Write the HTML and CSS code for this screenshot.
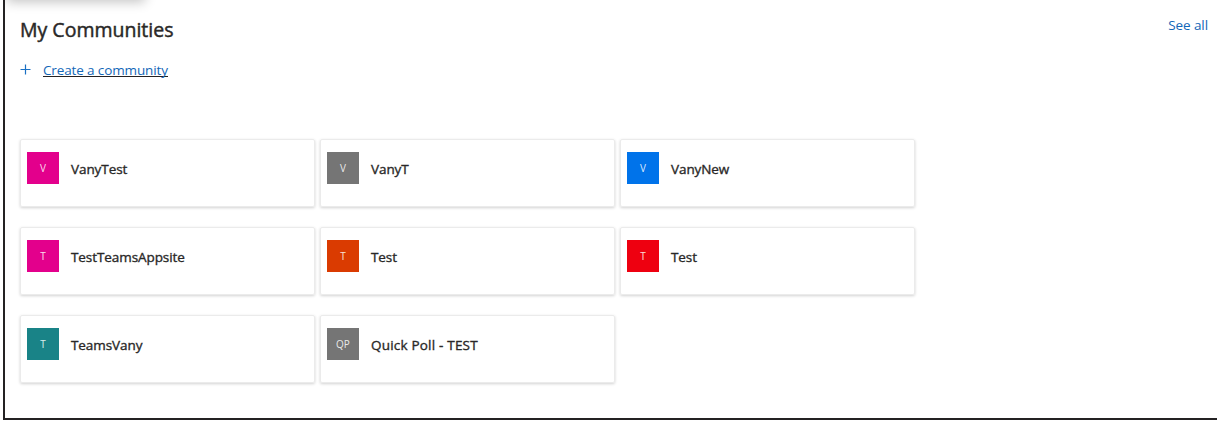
FILE: index.html
```html
<!DOCTYPE html>
<html lang="en">
<head>
<meta charset="utf-8">
<title>My Communities</title>
<link rel="stylesheet" href="styles.css">
</head>
<body>
<main class="panel">
  <div class="menu-shadow"></div>
  <header class="header">
    <h1 class="title">My Communities</h1>
    <a class="see-all">See all</a>
  </header>
  <div class="create">
    <svg class="plus" width="11" height="11" viewBox="0 0 11 11"><path d="M5.5 0.5v10M0.5 5.5h10"/></svg>
    <a class="create-link">Create a community</a>
  </div>
  <section class="grid">
    <article class="card"><span class="avatar pink">V</span><span class="name">VanyTest</span></article>
    <article class="card"><span class="avatar gray">V</span><span class="name">VanyT</span></article>
    <article class="card"><span class="avatar blue">V</span><span class="name">VanyNew</span></article>
    <article class="card"><span class="avatar pink">T</span><span class="name">TestTeamsAppsite</span></article>
    <article class="card"><span class="avatar orange">T</span><span class="name">Test</span></article>
    <article class="card"><span class="avatar red">T</span><span class="name">Test</span></article>
    <article class="card"><span class="avatar teal">T</span><span class="name">TeamsVany</span></article>
    <article class="card"><span class="avatar gray">QP</span><span class="name wide">Quick Poll - TEST</span></article>
  </section>
</main>
</body>
</html>
```
FILE: styles.css
```css
* { box-sizing: border-box; }
body {
  margin: 0;
  background: #fff;
  color: #292827;
  font-family: "Segoe UI", "Open Sans", "Noto Sans", sans-serif;
  overflow: hidden;
}
.panel {
  position: relative;
  height: 420px;
  margin-left: 3px;
  padding: 16px 9px 0 15px;
  border-left: 2px solid #242223;
  border-bottom: 2px solid #242223;
  overflow: hidden;
}
.menu-shadow {
  position: absolute;
  top: -20px;
  left: 2px;
  width: 138px;
  height: 18px;
  box-shadow: 0 4px 12px rgba(0, 0, 0, .24);
}
.header {
  display: flex;
  justify-content: space-between;
  height: 28px;
}
.title {
  margin: 0;
  font-size: 19.5px;
  font-weight: 400;
  line-height: 28px;
  -webkit-text-stroke: .45px #292827;
}
.see-all {
  font-size: 13.5px;
  letter-spacing: -.1px;
  line-height: 19px;
  color: #1267b8;
}
.create {
  display: flex;
  align-items: flex-start;
  gap: 12px;
  height: 20px;
  margin-top: 16px;
}
.plus {
  margin-top: 4px;
  fill: none;
  stroke: #1a70c4;
  stroke-width: 1.2;
}
.create-link {
  height: 17px;
  border-bottom: 1px solid #242223;
  font-size: 13.5px;
  letter-spacing: -.13px;
  line-height: 20px;
  color: #1267b8;
}
.grid {
  display: grid;
  grid-template-columns: repeat(3, 295px);
  gap: 20px 5px;
  margin-top: 59px;
}
.card {
  display: flex;
  align-items: flex-start;
  gap: 12px;
  height: 68px;
  padding: 12px 6px;
  border: 1px solid #ebebeb;
  border-radius: 2px;
  box-shadow: 0 1px 3px rgba(0, 0, 0, .18);
}
.avatar {
  width: 32px;
  height: 32px;
  color: rgba(255, 255, 255, .86);
  font-size: 10px;
  line-height: 33px;
  text-align: center;
}
.name {
  font-size: 13.5px;
  line-height: 34px;
  letter-spacing: -.08px;
  -webkit-text-stroke: .35px #292827;
}
.name.wide { letter-spacing: .2px; }
.pink { background: #e3008c; }
.gray { background: #757575; }
.blue { background: #0073ea; }
.orange { background: #da3b01; }
.red { background: #ee0010; }
.teal { background: #198387; }
```
